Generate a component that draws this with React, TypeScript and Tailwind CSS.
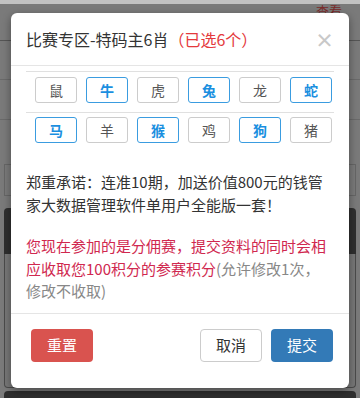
const zodiac = [
  { name: '鼠', on: false },
  { name: '牛', on: true },
  { name: '虎', on: false },
  { name: '兔', on: true },
  { name: '龙', on: false },
  { name: '蛇', on: true },
  { name: '马', on: true },
  { name: '羊', on: false },
  { name: '猴', on: true },
  { name: '鸡', on: false },
  { name: '狗', on: true },
  { name: '猪', on: false },
]

const font = { fontFamily: '"Noto Sans CJK SC", "Noto Sans", sans-serif' }

function ZodiacRow({ items }: { items: typeof zodiac }) {
  return (
    <div className="flex gap-[9px] pl-[9px]">
      {items.map((z) => (
        <button
          key={z.name}
          className={
            z.on
              ? 'h-[26px] w-[42px] rounded-[3px] border border-[#3a9ce0] bg-white text-[14px] font-bold text-[#1a8fe0] leading-none'
              : 'h-[26px] w-[42px] rounded-[3px] border border-[#cccccc] bg-white text-[14px] text-[#555] leading-none'
          }
        >
          {z.name}
        </button>
      ))}
    </div>
  )
}

export default function App() {
  return (
    <div className="relative h-[398px] w-[360px] overflow-hidden bg-[#7a7a7a]" style={font}>
      {/* dimmed page behind */}
      <div className="h-[4px] bg-[#c2c2c2]" />
      <div className="flex h-[37px] justify-end border-b border-[#555] pr-[18px]">
        <span className="text-[13px] leading-[14px] text-[#7a2a2a]">查看</span>
      </div>
      <div className="h-[39px] border-b border-[#6a6a6a]" />
      <div className="h-[40px] border-b border-[#6a6a6a]" />
      <div className="mx-[4px] mt-[44px] h-[32px] border border-[#666]" />
      <div className="mx-[4px] mt-[12px] h-[46px] rounded-t-[4px] bg-[#2f2f2f]" />
      <div className="mx-[4px] h-[134px] rounded-b-[4px] border-x border-b border-[#4a4a4a] bg-[#777]" />
      <div className="mx-[4px] mt-[3px] h-[20px] rounded-t-[4px] bg-[#2e2e2e]" />

      {/* modal */}
      <div className="absolute left-[11px] top-[13px] w-[338px] rounded-[6px] bg-white shadow-[0_3px_9px_rgba(0,0,0,0.4)]">
        <div className="flex h-[53px] items-center justify-between border-b border-[#e5e5e5] pl-[15px] pr-[15px]">
          <h4 className="text-[16px] leading-[22px] text-[#333]">
            比赛专区-特码主6肖<span className="text-[#e4393c]">（已选6个）</span>
          </h4>
          <span className="text-[19px] font-bold leading-none text-[#c8c8c8]">×</span>
        </div>

        <div className="px-[15px] pt-[5px]">
          <div className="border-t border-[#e0e0e0] pt-[5px] pb-[9px]">
            <ZodiacRow items={zodiac.slice(0, 6)} />
          </div>
          <div className="border-t border-[#e0e0e0] pt-[4px]">
            <ZodiacRow items={zodiac.slice(6)} />
          </div>

          <p className="mt-[28px] text-[15px] leading-[22.5px] text-[#333]">
            郑重承诺：连准10期，加送价值800元的钱管家大数据管理软件单用户全能版一套！
          </p>
          <p className="mt-[19px] text-[15px] leading-[22.5px] text-[#d0284f]">
            您现在参加的是分佣赛，提交资料的同时会相应收取您100积分的参赛积分<span className="text-[#888]">(允许修改1次，修改不收取)</span>
          </p>
        </div>

        <div className="mt-[10px] flex items-center justify-between border-t border-[#e5e5e5] pl-[20px] pr-[16px] pt-[15px] pb-[26px]">
          <button className="h-[33px] w-[62px] rounded-[4px] bg-[#d9534f] text-[15px] text-white">重置</button>
          <div className="flex gap-[9px]">
            <button className="h-[33px] w-[62px] rounded-[4px] border border-[#ccc] bg-white text-[15px] text-[#333]">
              取消
            </button>
            <button className="h-[33px] w-[62px] rounded-[4px] bg-[#337ab7] text-[15px] text-white">提交</button>
          </div>
        </div>
      </div>
    </div>
  )
}
